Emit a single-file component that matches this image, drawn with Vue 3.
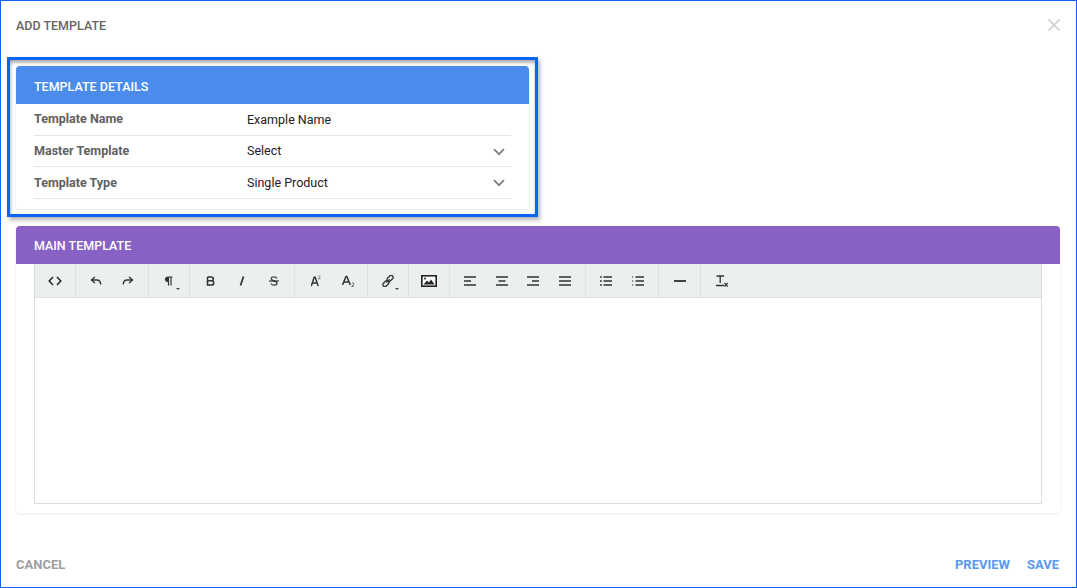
<script setup>
const rows = [
  { label: 'Template Name', value: 'Example Name', select: false },
  { label: 'Master Template', value: 'Select', select: true },
  { label: 'Template Type', value: 'Single Product', select: true },
]
</script>

<template>
  <div class="dialog">
    <header class="top">
      <h1>ADD TEMPLATE</h1>
      <svg class="close" width="12" height="12" viewBox="0 0 12 12"><path d="M.5.5l11 11M11.500.5l-11 11" stroke="#d0d0d0" stroke-width="1.600" fill="none"/></svg>
    </header>

    <section class="card details">
      <div class="band blue">TEMPLATE DETAILS</div>
      <div class="rows">
        <div v-for="r in rows" :key="r.label" class="row">
          <span class="label">{{ r.label }}</span>
          <span class="value">{{ r.value }}</span>
          <svg v-if="r.select" class="chev" width="12" height="8" viewBox="0 0 12 8"><path d="M1 1.200l5 5 5-5" stroke="#808080" stroke-width="1.800" fill="none"/></svg>
        </div>
      </div>
      <div class="highlight"></div>
    </section>

    <section class="card main">
      <div class="band purple">MAIN TEMPLATE</div>
      <div class="editor">
        <div class="toolbar">
          <div class="grp w40">
            <button><svg width="14" height="10" viewBox="0 0 14 10"><path d="M5 1L1.200 5 5 9M9 1l3.800 4L9 9" stroke="#222" stroke-width="1.500" fill="none"/></svg></button>
          </div>
          <div class="grp w73">
            <button><svg width="12" height="10" viewBox="0 0 12 10"><path d="M5 1L1.500 4 5 7" stroke="#333" stroke-width="1.400" fill="none"/><path d="M2 4h5c2.500 0 3.500 1.500 3.800 4.500" stroke="#333" stroke-width="1.400" fill="none"/></svg></button>
            <button><svg width="12" height="10" viewBox="0 0 12 10"><path d="M7 1l3.500 3L7 7" stroke="#333" stroke-width="1.400" fill="none"/><path d="M10 4H5C2.500 4 1.500 5.500 1.200 8.500" stroke="#333" stroke-width="1.400" fill="none"/></svg></button>
          </div>
          <div class="grp w41 caret">
            <button><svg width="8" height="10" viewBox="0 0 8 10"><path d="M3.500 1H7.500M3.500 1C1.500 1 .5 2 .5 3.300S1.500 5.600 3.500 5.600M3.500 1v8.500M6 1v8.500" stroke="#333" stroke-width="1.200" fill="#333"/></svg></button>
          </div>
          <div class="grp w105">
            <button><svg width="9" height="10" viewBox="0 0 9 10"><path d="M1.500 1H5.200C8 1 8 4.800 5.200 4.800H1.500M5.200 4.800C8.600 4.800 8.600 9 5.200 9H1.500V1" stroke="#333" stroke-width="1.500" fill="none"/></svg></button>
            <button><svg width="8" height="10" viewBox="0 0 8 10"><path d="M5.500.5L2.500 9.500" stroke="#333" stroke-width="1.700" fill="none"/></svg></button>
            <button><svg width="10" height="10" viewBox="0 0 10 10"><path d="M8 2.400C7.500 1.200 6.300.8 5 .8 3.400.8 2.300 1.500 2.300 2.800c0 2.800 5.700 1.600 5.700 4.400C8 8.500 6.800 9.200 5.100 9.200 3.700 9.200 2.500 8.700 2 7.600" stroke="#444" stroke-width="1.300" fill="none"/><path d="M0 5h10" stroke="#333" stroke-width="1.200"/></svg></button>
          </div>
          <div class="grp w73">
            <button class="nudge1"><svg width="10" height="12" viewBox="0 0 10 12"><path d="M.3 11L3.200 2.200h1l3 8.800M1.500 8h4.400" stroke="#333" stroke-width="1.500" fill="none"/><path d="M7.300 1.200c.4-.7 1.900-.6 1.900.4 0 .7-1.200 1.100-1.900 2.200h2.200" stroke="#555" stroke-width=".7" fill="none"/></svg></button>
            <button class="nudge2"><svg width="13" height="12" viewBox="0 0 13 12"><path d="M.5 10L4 1.500h.8l3.500 8.500M1.800 7h5.200" stroke="#333" stroke-width="1.500" fill="none"/><path d="M9.700 8.300c.5-.7 2.200-.6 2.200.5 0 .8-1.400 1.200-2.200 2.500h2.500" stroke="#444" stroke-width=".8" fill="none"/></svg></button>
          </div>
          <div class="grp w41 caret">
            <button><svg width="12" height="12" viewBox="0 0 12 12"><g stroke="#333" stroke-width="1.300" fill="none"><rect x="4.700" y="1.400" width="6.800" height="4" rx="2" transform="rotate(-45 8.100 3.400)"/><rect x=".5" y="6.600" width="6.800" height="4" rx="2" transform="rotate(-45 3.900 8.600)"/><path d="M4.400 7.600l3.200-3.200"/></g></svg></button>
          </div>
          <div class="grp w41">
            <button><svg width="16" height="12" viewBox="0 0 16 12"><rect x=".8" y=".8" width="14.400" height="10.400" fill="#fff" stroke="#222" stroke-width="1.600"/><path d="M2.500 9.500l3.500-4 2 2 2-3 3.500 5z" fill="#222"/><circle cx="4" cy="3.500" r="1" fill="#222"/></svg></button>
          </div>
          <div class="grp w136">
            <button><svg class="lines" width="12" height="10" viewBox="0 0 12 10"><path d="M0 1h12M0 5h7M0 9h12"/></svg></button>
            <button><svg class="lines" width="12" height="10" viewBox="0 0 12 10"><path d="M0 1h12M2.500 5h7M0 9h12"/></svg></button>
            <button><svg class="lines" width="12" height="10" viewBox="0 0 12 10"><path d="M0 1h12M5 5h7M0 9h12"/></svg></button>
            <button><svg class="lines" width="12" height="10" viewBox="0 0 12 10"><path d="M0 1h12M0 5h12M0 9h12"/></svg></button>
          </div>
          <div class="grp w73">
            <button><svg class="lines" width="12" height="10" viewBox="0 0 12 10"><path d="M3.500 1H12M3.500 5H12M3.500 9H12M0 1h1.800M0 5h1.800M0 9h1.800"/></svg></button>
            <button><svg class="lines thin" width="12" height="10" viewBox="0 0 12 10"><path class="n" d="M0 1h1.200M0 5h1.200M0 9h1.200"/><path d="M3.500 1H12M3.500 5H12M3.500 9H12"/></svg></button>
          </div>
          <div class="grp w42">
            <button><svg width="12" height="2" viewBox="0 0 12 2"><path d="M0 1h12" stroke="#222" stroke-width="1.700"/></svg></button>
          </div>
          <div class="grp w42 last">
            <button><svg width="12" height="12" viewBox="0 0 12 12"><path d="M.5 1h7.500M4.200 1v7M0 10.500h8" stroke="#333" stroke-width="1.300" fill="none"/><path d="M8.500 8l3.200 3.500M11.700 8l-3.200 3.500" stroke="#333" stroke-width="1.200" fill="none"/></svg></button>
          </div>
        </div>
        <div class="area"></div>
      </div>
    </section>

    <footer class="foot">
      <a class="cancel">CANCEL</a>
      <div class="right"><a>PREVIEW</a><a>SAVE</a></div>
    </footer>
  </div>
</template>

<style scoped>
.dialog {
  box-sizing: border-box;
  width: 1077px;
  height: 588px;
  border: 1px solid #0a66f0;
  background: #fff;
  padding: 0 16px 0 15px;
  font-family: Roboto, "Liberation Sans", sans-serif;
  display: flex;
  flex-direction: column;
  overflow: hidden;
}
.top {
  height: 65px;
  flex: none;
  display: flex;
  justify-content: space-between;
}
.top h1 {
  margin: 18px 0 0;
  font-size: 12.500px;
  line-height: 14px;
  font-weight: 500;
  color: #666;
}
.close { margin: 18px 0 0; }
.card {
  position: relative;
  background: #fff;
  border-radius: 4px;
  box-shadow: 0 1px 3px rgba(0, 0, 0, 0.1);
}
.details { width: 513px; height: 143px; }
.main { margin-top: 17px; height: 287px; }
.band {
  height: 38px;
  box-sizing: border-box;
  padding: 13px 0 0 18px;
  line-height: 14px;
  font-size: 12.500px;
  font-weight: 500;
  color: #fff;
  border-radius: 4px 4px 0 0;
}
.blue { background: #4a8bec; padding-top: 14px; }
.purple { background: #8762c4; }
.rows { padding: 0 18px; }
.row {
  height: 31px;
  display: flex;
  align-items: center;
  border-bottom: 1px solid #e6e6e6;
  box-sizing: border-box;
  position: relative;
  font-size: 12.500px;
}
.row:first-child { height: 32px; padding-bottom: 2px; }
.row:nth-child(2) { padding-bottom: 2px; }
.row:last-child { height: 32px; }
.label { width: 213px; font-weight: 700; color: #616161; }
.value { color: #222; padding-top: 1px; }
.row:last-child .value { padding-top: 0; }
.row:nth-child(2) .value { padding-top: 0; }
.chev { position: absolute; right: 6px; top: 12px; }
.highlight {
  position: absolute;
  left: -9px;
  top: -9px;
  width: 525px;
  height: 154px;
  border: 3px solid #0a66f0;
  box-shadow: 2px 3px 4px rgba(0, 0, 0, 0.3), inset 0 3px 3px rgba(0, 0, 0, 0.28), inset 2px 0 3px rgba(0, 0, 0, 0.1);
  pointer-events: none;
}
.editor {
  margin: 0 18px;
  height: 240px;
  box-sizing: border-box;
  border: 1px solid #dcdcdc;
  border-top: 0;
  display: flex;
  flex-direction: column;
}
.toolbar {
  height: 34px;
  flex: none;
  display: flex;
  background: #ebeff0;
  border-bottom: 1px solid #dde1e2;
  box-sizing: border-box;
}
.grp {
  box-sizing: border-box;
  display: flex;
  align-items: center;
  justify-content: center;
  border-right: 1px solid #dde2e3;
  height: 33px;
  padding-top: 1px;
  position: relative;
}
.grp.last { border-right: 0; }
.w40 { width: 41px; }
.w41 { width: 41px; }
.w42 { width: 42px; }
.w73 { width: 73px; }
.w105 { width: 105px; }
.w136 { width: 136px; }
.grp button {
  border: 0;
  background: none;
  padding: 0;
  width: 31.500px;
  height: 32px;
  display: flex;
  align-items: center;
  justify-content: center;
}
.grp button.nudge1 { padding-left: 1px; }
.grp button.nudge2 { padding-left: 3px; }
.caret::after {
  content: "";
  position: absolute;
  right: 9px;
  bottom: 7px;
  border: 2px solid transparent;
  border-top-color: #444;
  border-bottom: 0;
}
.lines path { stroke: #333; stroke-width: 1.500; fill: none; }
.lines.thin .n { stroke-width: 1; }
.area { flex: 1; background: #fff; }
.foot {
  margin-top: auto;
  padding: 0 1px 15px 0;
  display: flex;
  justify-content: space-between;
  font-size: 13px;
  line-height: 14px;
  font-weight: 700;
}
.cancel { color: #9e9e9e; }
.right { display: flex; gap: 17px; color: #5a97f2; }
</style>
